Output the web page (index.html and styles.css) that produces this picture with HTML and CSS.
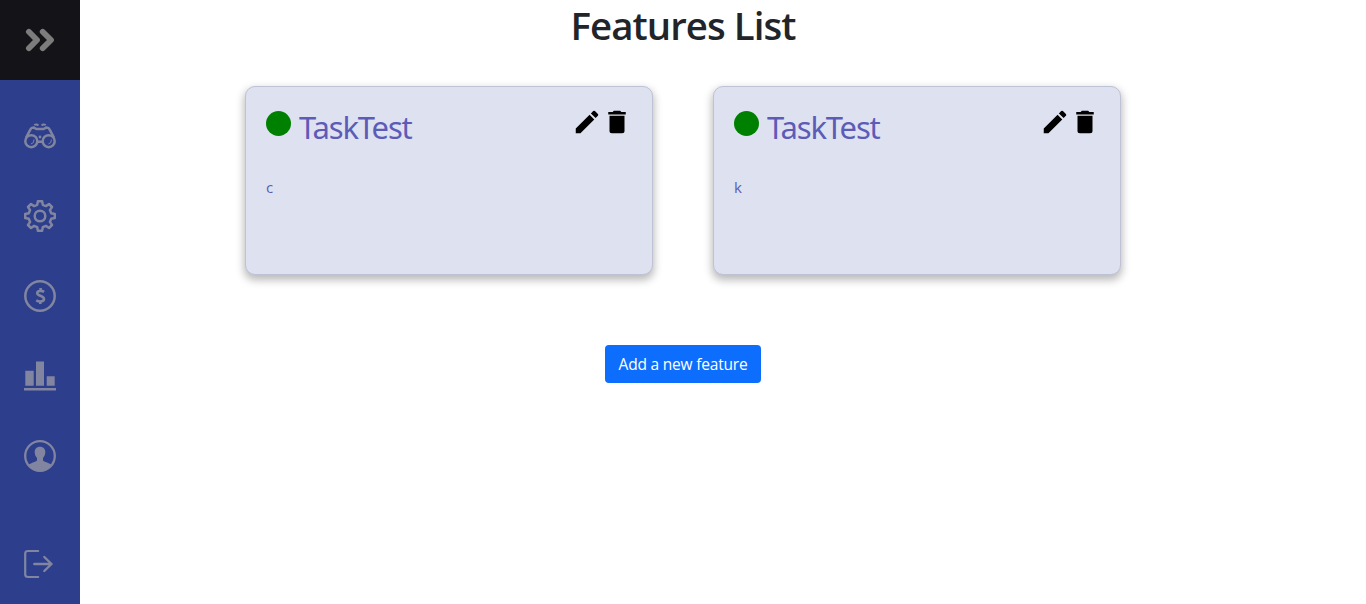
FILE: index.html
```html
<!DOCTYPE html>
<html lang="en">
<head>
<meta charset="utf-8">
<title>Features List</title>
<link rel="stylesheet" href="styles.css">
</head>
<body>
<nav class="sidebar">
  <a class="toggle"><svg width="32" height="32" viewBox="0 0 32 32" fill="none" stroke="currentColor" stroke-width="5.8" stroke-linecap="round" stroke-linejoin="round"><path d="M4.9 7.8l8.1 8.2-8.1 8.2M18.7 7.8l8.3 8.2-8.3 8.2"/></svg></a>
  <a class="item"><svg width="32" height="32" viewBox="0 0 32 32" fill="none" stroke="currentColor" stroke-width="2.5"><circle cx="7.3" cy="21.2" r="6"/><circle cx="24.7" cy="21.2" r="6"/><path d="M2.1 17.5L6.3 9.6Q7.4 7.3 10 7.6L12.5 9.1H19.5L22 7.6Q24.6 7.3 25.7 9.6L29.9 17.5M13.3 21.8H18.7"/><path d="M10.2 5Q12.6 3.6 14.4 5.5M21.8 5Q19.4 3.6 17.6 5.5" stroke-width="2"/><circle cx="16" cy="17" r="1.4" fill="currentColor" stroke="none"/><path d="M10 19.5Q10.4 23.3 7 24M27.4 19.5Q27.8 23.3 24.4 24" stroke-width="1"/></svg></a>
  <a class="item"><svg width="32" height="32" viewBox="0 0 32 32" fill="none" stroke="currentColor" stroke-width="2.5" stroke-linejoin="round"><path d="M13.9 1.2H18.1L18.8 4.8L21.9 6.1L25 4L28 7L25.9 10.1L27.2 13.2L30.8 13.9V18.1L27.2 18.8L25.9 21.9L28 25L25 28L21.9 25.9L18.8 27.2L18.1 30.8H13.9L13.2 27.2L10.1 25.9L7 28L4 25L6.1 21.9L4.8 18.8L1.2 18.1V13.9L4.8 13.2L6.1 10.1L4 7L7 4L10.1 6.1L13.2 4.8Z"/><circle cx="16" cy="16" r="5.3"/></svg></a>
  <a class="item"><svg width="32" height="32" viewBox="0 0 32 32" fill="none" stroke="currentColor"><circle cx="16" cy="16" r="14.7" stroke-width="2.5"/><path d="M20.1 11.8C18.2 10.6 13.2 10.2 13.2 13.2C13.2 16 20 15.6 20 19C20 22 15 21.9 12.2 20.4M16.6 8V11M16.3 21V24.1" stroke-width="2.6"/></svg></a>
  <a class="item"><svg width="32" height="32" viewBox="0 0 32 32" fill="currentColor"><path d="M1.3 10.7H9.7V25.7H1.3ZM12 1.4H20V25.7H12ZM22.7 16.2H30.7V25.7H22.7ZM0 28H32V30.6H0Z"/></svg></a>
  <a class="item"><svg width="32" height="32" viewBox="0 0 32 32"><circle cx="16" cy="16" r="14.8" fill="none" stroke="currentColor" stroke-width="2.3"/><path fill="currentColor" d="M16 6.8C19.3 6.8 21.3 9 21.3 12C21.3 15.1 20.3 16.3 19 18V20.3C19 22 25 22.5 27.5 25C25 29.4 20.5 31.2 16 31.2S7 29.4 4.5 25C7 22.5 13 22 13 20.3V18C11.7 16.3 10.7 15.1 10.7 12C10.7 9 12.7 6.8 16 6.8Z"/></svg></a>
  <a class="item logout"><svg width="32" height="32" viewBox="0 0 32 32" fill="none" stroke="currentColor" stroke-width="2.2" stroke-linecap="round" stroke-linejoin="round"><path d="M14.2 3H4Q1.2 3 1.2 5.5V26.5Q1.2 29 4 29H14.2"/><path d="M10.3 16H27.5M20.3 9L27.5 16L20.3 23" stroke-width="2.4"/></svg></a>
</nav>
<main class="content">
  <h1 class="title">Features List</h1>
  <section class="cards">
    <article class="card">
      <header class="head"><span class="dot"></span><h2 class="name">TaskTest</h2>
        <span class="actions"><svg width="30" height="30" viewBox="0 0 24 24"><path d="M3 17.25V21h3.75L17.81 9.94l-3.75-3.75L3 17.25zM20.71 7.04a1 1 0 0 0 0-1.41l-2.34-2.34a1 1 0 0 0-1.41 0l-1.83 1.83 3.75 3.75 1.83-1.83z"/></svg><svg width="30" height="30" viewBox="0 0 24 24"><path d="M6 19c0 1.4.6 2 2 2h8c1.4 0 2-.6 2-2V7H6v12zM19 4h-3.5l-1-1h-5l-1 1H5v2h14V4z"/></svg></span>
      </header>
      <p class="text">c</p>
    </article>
    <article class="card">
      <header class="head"><span class="dot"></span><h2 class="name">TaskTest</h2>
        <span class="actions"><svg width="30" height="30" viewBox="0 0 24 24"><path d="M3 17.25V21h3.75L17.81 9.94l-3.75-3.75L3 17.25zM20.71 7.04a1 1 0 0 0 0-1.41l-2.34-2.34a1 1 0 0 0-1.41 0l-1.83 1.83 3.75 3.75 1.83-1.83z"/></svg><svg width="30" height="30" viewBox="0 0 24 24"><path d="M6 19c0 1.4.6 2 2 2h8c1.4 0 2-.6 2-2V7H6v12zM19 4h-3.5l-1-1h-5l-1 1H5v2h14V4z"/></svg></span>
      </header>
      <p class="text">k</p>
    </article>
  </section>
  <button class="add">Add a new feature</button>
</main>
</body>
</html>
```

FILE: styles.css
```css
* { box-sizing: border-box; }
body {
  margin: 0;
  height: 604px;
  overflow: hidden;
  display: flex;
  background: #fff;
  color: #212529;
  font-family: "Open Sans", "Noto Sans", sans-serif;
}
svg { display: block; }
.sidebar {
  width: 80px;
  height: 604px;
  flex: none;
  display: flex;
  flex-direction: column;
  background: #2c3e8c;
  color: #8185a0;
}
.toggle {
  height: 80px;
  margin-bottom: 16px;
  display: grid;
  place-items: center;
  background: #141418;
  color: #7c7c7c;
}
.item { height: 80px; display: grid; place-items: center; }
.logout { margin-top: auto; }
.content {
  flex: 1;
  padding-right: 80px;
  display: flex;
  flex-direction: column;
  align-items: center;
}
.title {
  margin: 1px 0 37px;
  font-size: 38.4px;
  line-height: 48px;
  font-weight: 600;
  letter-spacing: -0.95px;
}
.cards { display: flex; gap: 60px; }
.card {
  width: 408px;
  height: 189px;
  padding: 20px;
  border: 1px solid #bfc1d5;
  border-radius: 10px;
  background: #dee1f0;
  color: #5c5cb8;
  box-shadow: 0 4px 8px 1px rgba(0, 0, 0, .28);
}
.head { display: flex; height: 62px; }
.dot { width: 25px; height: 25px; margin-top: 4px; border-radius: 50%; background: green; }
.name {
  margin: 0 0 0 8px;
  font-family: "Noto Sans", sans-serif;
  font-size: 31px;
  line-height: 40px;
  font-weight: 400;
  letter-spacing: -1.2px;
}
.actions { display: flex; margin: 0 0 0 auto; color: #000; }
.text { margin: 6px 0 0; font-size: 15px; line-height: 24px; }
.add {
  width: 156px;
  height: 38px;
  margin-top: 70px;
  padding: 0;
  border: 0;
  border-radius: 4px;
  background: #0d6efd;
  color: #fff;
  font: 15.5px/38px "Open Sans", "Noto Sans", sans-serif;
  letter-spacing: -0.2px;
}
```
